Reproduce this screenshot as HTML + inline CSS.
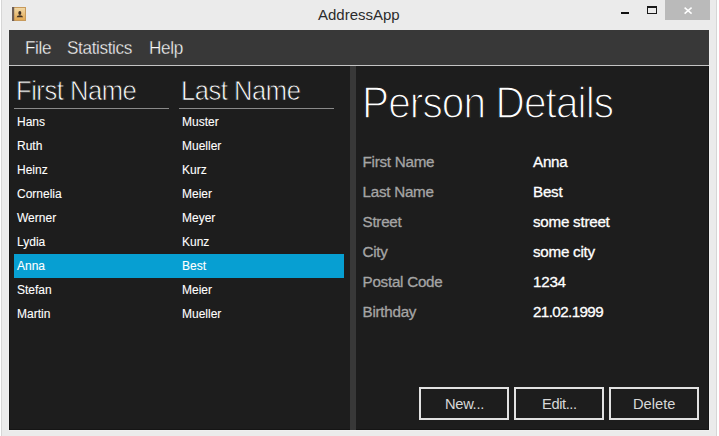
<!DOCTYPE html>
<html><head><meta charset="utf-8">
<style>
*{margin:0;padding:0;box-sizing:border-box}
html,body{width:719px;height:436px;overflow:hidden;background:#ebebeb;font-family:"Liberation Sans",sans-serif}
.a{position:absolute;white-space:nowrap;line-height:1}
.lb{position:absolute;left:1px;top:0;width:1px;height:436px;background:#d6d6d6}
.lw{position:absolute;left:0;top:0;width:1px;height:436px;background:#fff}
.rb{position:absolute;left:716px;top:0;width:1px;height:436px;background:#d6d6d6}
.rw{position:absolute;left:717px;top:0;width:2px;height:436px;background:#fff}
#content{position:absolute;left:9px;top:30px;width:700px;height:400px;background:#1d1d1d}
#menubar{position:absolute;left:9px;top:30px;width:700px;height:35px;background:#383838}
#menuline{position:absolute;left:9px;top:65px;width:700px;height:1px;background:#c4c4c4}
.menu{font-size:18.67px;color:#fafafa;letter-spacing:-0.4px;-webkit-text-stroke:0.35px #383838;transform:scaleX(0.92);transform-origin:0 0}
.hdr{font-size:28px;color:#fff;letter-spacing:-0.5px;transform:scaleX(0.912);transform-origin:0 0;-webkit-text-stroke:0.75px #1d1d1d}
.uline{position:absolute;top:108px;height:1px;background:#898989}
.cell{font-size:12px;color:#fff;-webkit-text-stroke:0.1px #fff}
#sel{position:absolute;left:14px;top:254px;width:330px;height:24px;background:#079fd2}
#divider{position:absolute;left:350px;top:66px;width:6px;height:364px;background:#383838}
.big{font-size:44.5px;color:#fff;letter-spacing:-1px;transform:scaleX(0.912);transform-origin:0 0;-webkit-text-stroke:1.4px #1d1d1d}
.lab{font-size:15.2px;color:#a5a5a5;-webkit-text-stroke:0.3px #a5a5a5;letter-spacing:-0.25px}
.val{font-size:15.2px;color:#fff;-webkit-text-stroke:0.3px #fff;letter-spacing:-0.25px}
.btn{position:absolute;top:387px;width:90px;height:33px;border:2px solid #e2e2e2;background:#1d1d1d}
.bt{font-size:14.67px;color:#d8d8d8}
</style></head><body>
<div class="lw"></div><div class="lb"></div><div class="rb"></div><div class="rw"></div>
<!-- title bar -->
<svg class="a" style="left:12px;top:7px" width="14" height="14" viewBox="0 0 14 14">
  <defs><linearGradient id="g" x1="0" y1="0" x2="0" y2="1"><stop offset="0" stop-color="#f1d9a8"/><stop offset="1" stop-color="#e2a64e"/></linearGradient></defs>
  <rect x="0.5" y="0.5" width="13" height="13" fill="url(#g)" stroke="#c79a5c" stroke-width="1"/>
  <rect x="0" y="0" width="2.2" height="14" fill="#6d5e57"/>
  <ellipse cx="7.8" cy="6" rx="1.5" ry="2.1" fill="#3e2f22"/>
  <path d="M4.6 10.3 Q4.9 8.4 7.8 8.2 Q10.7 8.4 11.1 10.3 Z" fill="#3e2f22"/>
</svg>
<div class="a" id="title" style="left:318px;top:7px;font-size:15px;color:#2b2b2b">AddressApp</div>
<div class="a" style="left:621px;top:12px;width:8px;height:2px;background:#111"></div>
<div class="a" style="left:647px;top:6px;width:10px;height:8px;border:1px solid #1a1a1a;border-top-width:2px"></div>
<div class="a" style="left:665px;top:0;width:45px;height:20px;background:#bababa"></div>
<svg class="a" style="left:683px;top:6px" width="10" height="10" viewBox="0 0 10 10"><path d="M1.6 1.6L8.6 7.6M8.6 1.6L1.6 7.6" stroke="#fff" stroke-width="1.5"/></svg>

<div id="content"></div>
<div id="menubar"></div>
<div id="menuline"></div>
<div class="a menu" style="left:25px;top:39px">File</div>
<div class="a menu" style="left:67px;top:39px">Statistics</div>
<div class="a menu" style="left:149px;top:39px">Help</div>

<!-- table -->
<div class="a hdr" style="left:15.5px;top:77px">First Name</div>
<div class="a hdr" style="left:180.5px;top:77px">Last Name</div>
<div class="uline" style="left:14px;width:155px"></div>
<div class="uline" style="left:179px;width:155px"></div>
<div id="sel"></div>
<div class="a cell" style="left:17px;top:116px">Hans</div><div class="a cell" style="left:182px;top:116px">Muster</div>
<div class="a cell" style="left:17px;top:140px">Ruth</div><div class="a cell" style="left:182px;top:140px">Mueller</div>
<div class="a cell" style="left:17px;top:164px">Heinz</div><div class="a cell" style="left:182px;top:164px">Kurz</div>
<div class="a cell" style="left:17px;top:188px">Cornelia</div><div class="a cell" style="left:182px;top:188px">Meier</div>
<div class="a cell" style="left:17px;top:212px">Werner</div><div class="a cell" style="left:182px;top:212px">Meyer</div>
<div class="a cell" style="left:17px;top:236px">Lydia</div><div class="a cell" style="left:182px;top:236px">Kunz</div>
<div class="a cell" style="left:17px;top:260px">Anna</div><div class="a cell" style="left:182px;top:260px">Best</div>
<div class="a cell" style="left:17px;top:284px">Stefan</div><div class="a cell" style="left:182px;top:284px">Meier</div>
<div class="a cell" style="left:17px;top:308px">Martin</div><div class="a cell" style="left:182px;top:308px">Mueller</div>

<div class="a" style="left:9px;top:66px;width:1px;height:364px;background:#151515"></div>
<div class="a" style="left:708px;top:66px;width:1px;height:364px;background:#151515"></div>
<div class="a" style="left:9px;top:429px;width:700px;height:1px;background:#151515"></div>
<div class="a" style="left:8px;top:30px;width:1px;height:401px;background:#efefef"></div>
<div class="a" style="left:709px;top:30px;width:1px;height:401px;background:#efefef"></div>
<div class="a" style="left:8px;top:430px;width:702px;height:1px;background:#efefef"></div>
<div id="divider"></div>

<!-- details -->
<div class="a big" style="left:362px;top:80.5px">Person Details</div>
<div class="a lab" style="left:362.5px;top:154px">First Name</div><div class="a val" style="left:533px;top:154px">Anna</div>
<div class="a lab" style="left:362.5px;top:184px">Last Name</div><div class="a val" style="left:533px;top:184px">Best</div>
<div class="a lab" style="left:362.5px;top:214px">Street</div><div class="a val" style="left:533px;top:214px">some street</div>
<div class="a lab" style="left:362.5px;top:244px">City</div><div class="a val" style="left:533px;top:244px">some city</div>
<div class="a lab" style="left:362.5px;top:274px">Postal Code</div><div class="a val" style="left:533px;top:274px">1234</div>
<div class="a lab" style="left:362.5px;top:304px">Birthday</div><div class="a val" style="left:533px;top:304px;letter-spacing:-0.6px">21.02.1999</div>

<div class="btn" style="left:419px"></div>
<div class="btn" style="left:514px"></div>
<div class="btn" style="left:609px"></div>
<div class="a bt" style="left:445px;top:397px;letter-spacing:-0.3px">New...</div>
<div class="a bt" style="left:542px;top:397px;letter-spacing:-0.4px">Edit...</div>
<div class="a bt" style="left:633px;top:397px">Delete</div>
</body></html>
